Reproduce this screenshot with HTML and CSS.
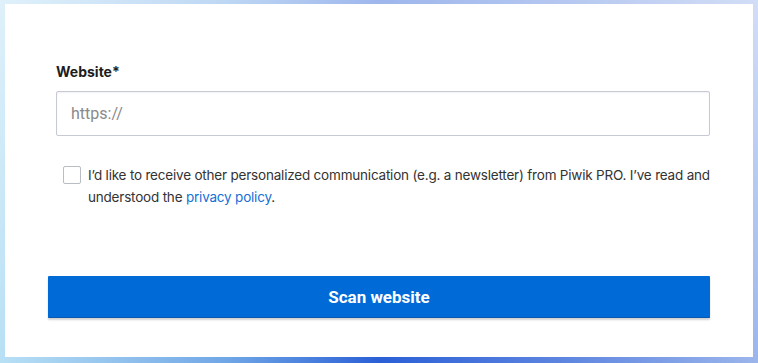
FILE: index.html
```html
<!DOCTYPE html>
<html lang="en">
<head>
    <meta charset="UTF-8">
    <meta name="viewport" content="width=device-width, initial-scale=1.0">
    <title>Scan website</title>
    <link rel="stylesheet" href="styles.css">
</head>
<body>
    <div class="card">
        <form class="scan-form" onsubmit="return false;">
            <div class="form-group">
                <label for="website">Website*</label>
                <input type="text" id="website" placeholder="https://">
            </div>

            <label class="consent">
                <input type="checkbox">
                <span>I’d like to receive other personalized communication (e.g. a newsletter) from Piwik PRO. I’ve read and understood the <a href="#">privacy policy</a>.</span>
            </label>

            <button type="submit">Scan website</button>
        </form>
    </div>
</body>
</html>
```

FILE: styles.css
```css
html, body {
    height: 100%;
}
body {
    margin: 0;
    font-family: Inter, "Noto Sans", sans-serif;
    color: #222;
    background:
        linear-gradient(to bottom, rgba(255,255,255,0.55), rgba(255,255,255,0) 100%),
        linear-gradient(to right, #b8e0f5 0%, #6fa6e6 30%, #2a5fd6 50%, #5f86e0 75%, #9cb6ec 100%);
    box-sizing: border-box;
    padding: 4px 5px 6px 5px;
}
.card {
    background: white;
    height: 100%;
    box-sizing: border-box;
    padding: 59px 43px 0 43px;
}
.form-group {
    padding: 0 0 0 8px;
}
.form-group label {
    display: block;
    font-size: 14px;
    font-weight: 700;
    color: #1d1d1d;
    line-height: 17px;
    margin-bottom: 11px;
}
.form-group input[type="text"] {
    width: 100%;
    height: 45px;
    box-sizing: border-box;
    border: 1px solid #c5cad3;
    border-radius: 2px;
    padding: 0 14px;
    font-family: Roboto, "Liberation Sans", sans-serif;
    font-size: 16px;
    color: #333;
    box-shadow: inset 0 1px 2px rgba(0,0,0,0.06);
}
.form-group input::placeholder {
    color: #8a8a8a;
}
.consent {
    display: flex;
    gap: 7px;
    margin: 28px 0 0 15px;
    font-size: 13.5px;
    letter-spacing: -0.2px;
    line-height: 22px;
    color: #333;
}
.consent input {
    appearance: none;
    flex: none;
    width: 18px;
    height: 18px;
    margin: 2px 0 0 0;
    border: 1px solid #b9bdc4;
    border-radius: 2px;
    background: white;
}
.consent a {
    color: #1570d6;
    text-decoration: none;
}
button {
    display: block;
    width: 100%;
    height: 42px;
    margin-top: 68px;
    background-color: #006bd7;
    color: white;
    border: none;
    border-bottom: 1px solid #0a58b0;
    border-radius: 1px;
    font-family: Roboto, "Liberation Sans", sans-serif;
    font-size: 17px;
    font-weight: 700;
    box-shadow: 0 2px 2px rgba(0,0,0,0.18);
    cursor: pointer;
}
```
